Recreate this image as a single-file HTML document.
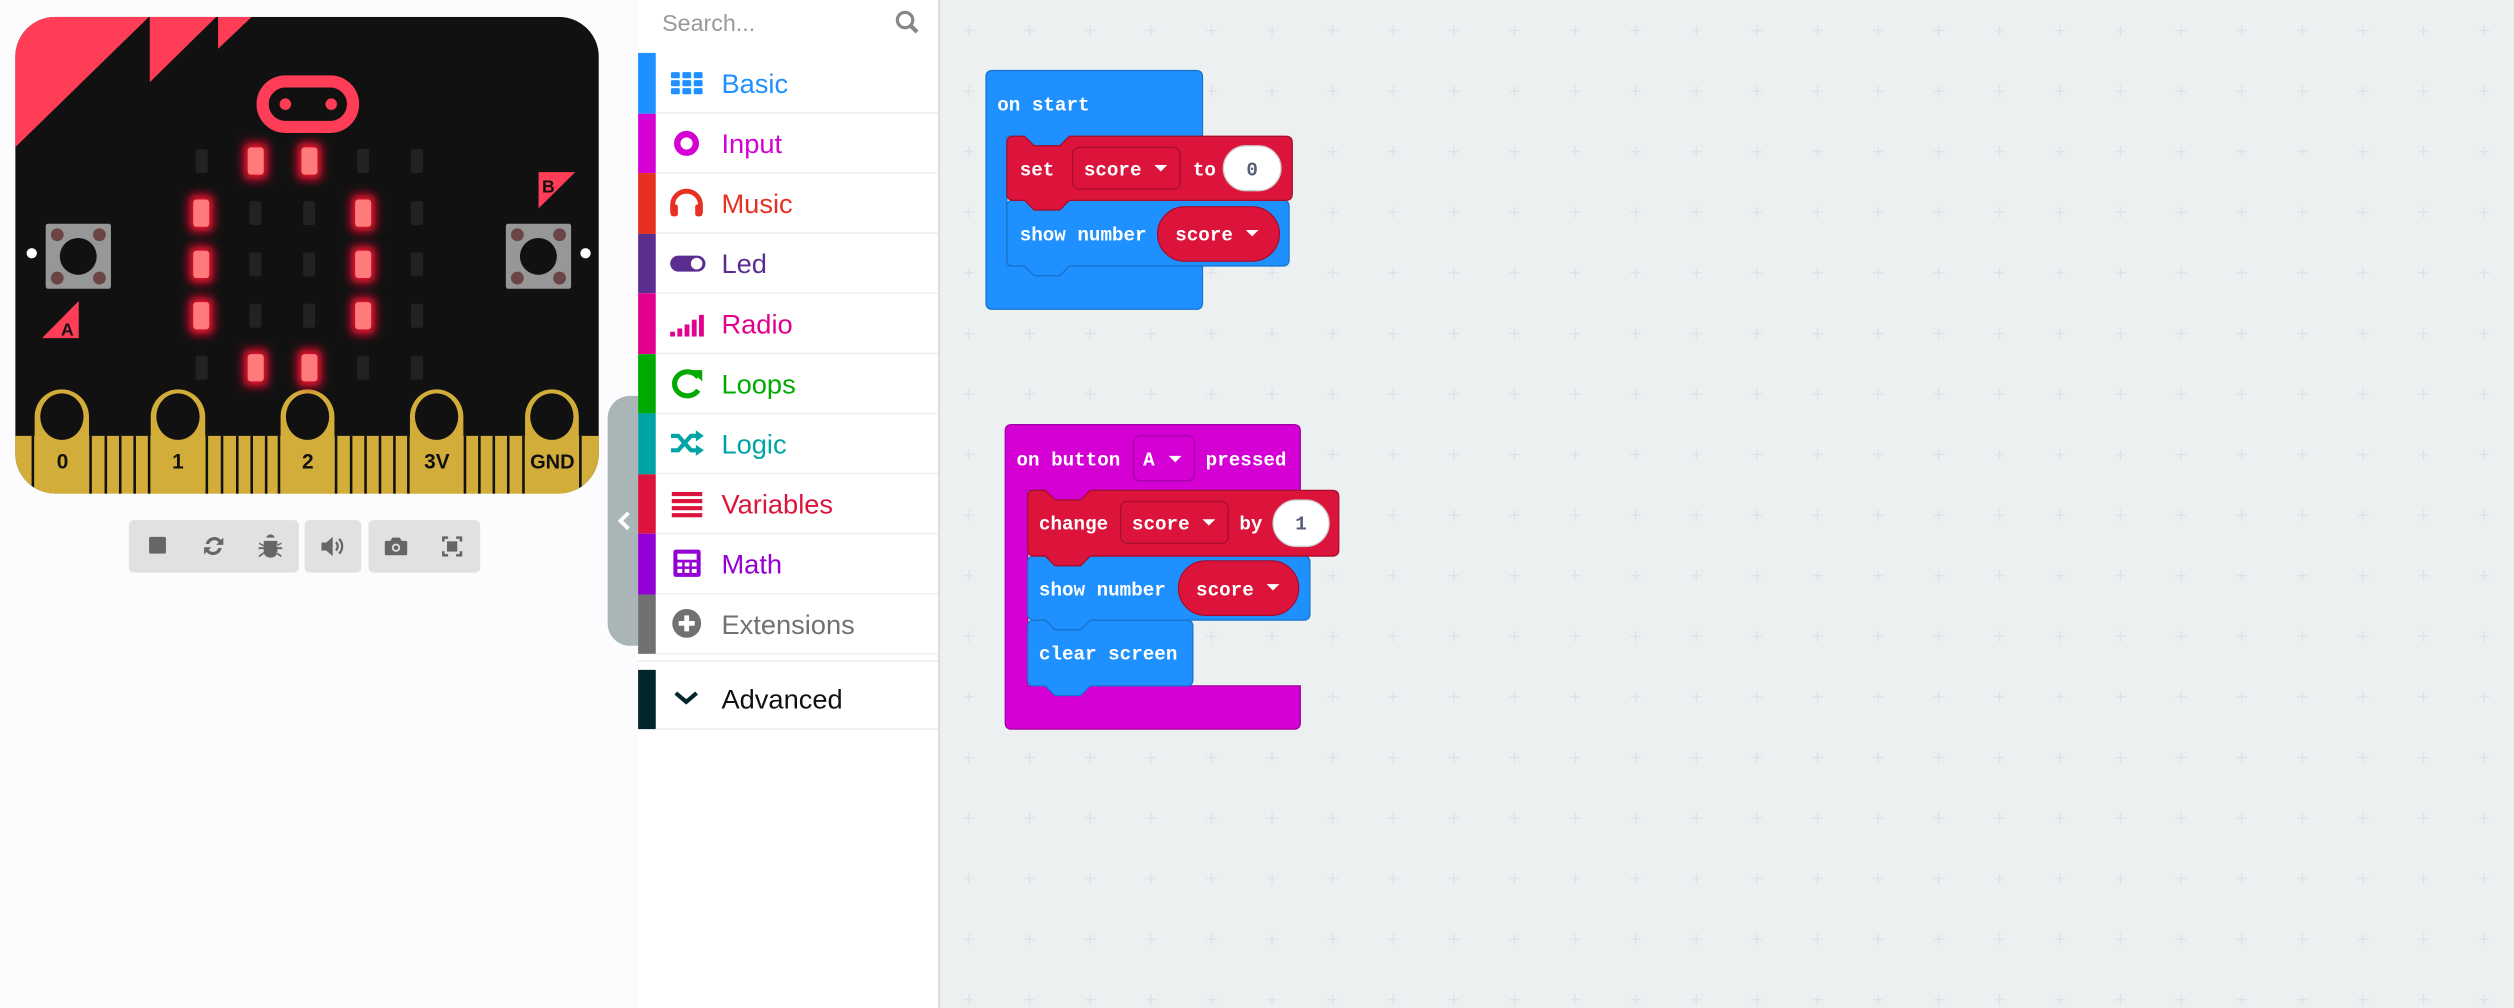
<!DOCTYPE html>
<html><head><meta charset="utf-8"><style>
html,body{margin:0;padding:0;width:2514px;height:1008px;overflow:hidden;background:#fcfcfe}
#w{position:absolute;left:0;top:0;width:1568px;height:629px;transform:scale(1.6033,1.6025);transform-origin:0 0}
svg{position:absolute;left:0;top:0}
.tb{font-family:"Liberation Sans",sans-serif;font-size:17px}
.bt{font-family:"Liberation Mono",monospace;font-weight:bold;font-size:12px;fill:#fff}
</style></head><body><div id="w">
<svg width="1568" height="629" viewBox="0 0 1568 629">
<defs>
<pattern id="g" x="585.5" y="0.2" width="37.8" height="37.8" patternUnits="userSpaceOnUse">
<path d="M18.9 15.5v6.8M15.5 18.9h6.8" stroke="#dde1e3" stroke-width="0.8"/></pattern>
<clipPath id="bc"><rect x="9.5" y="10.5" width="364" height="297.5" rx="25"/></clipPath>
<filter id="gl" x="-100%" y="-100%" width="300%" height="300%"><feGaussianBlur stdDeviation="3"/></filter>
</defs>
<rect x="0" y="0" width="398" height="629" fill="#fcfcfe"/>
<rect x="586" y="0" width="982" height="629" fill="#ecf0f1"/>
<rect x="586" y="0" width="982" height="629" fill="url(#g)"/>
<rect x="398" y="0" width="188" height="629" fill="#fff"/>
<rect x="585" y="0" width="1.5" height="629" fill="#dcdfe1"/>

<g clip-path="url(#bc)">
<rect x="9.5" y="10.5" width="364" height="297.5" fill="#111"/>
<polygon points="9.4,10.5 92.9,10.5 9.4,92" fill="#ff3d57"/>
<polygon points="93.4,10.5 134.9,10.5 93.4,51.3" fill="#ff3d57"/>
<polygon points="136,10.5 157,10.5 136,30.5" fill="#ff3d57"/>
<rect x="0" y="272" width="400" height="40" fill="#d2ad3a"/>
<g stroke="#111" stroke-width="1.6">
<line x1="20.5" y1="272" x2="20.5" y2="310"/>
<line x1="56.5" y1="272" x2="56.5" y2="310"/><line x1="66" y1="272" x2="66" y2="310"/><line x1="75" y1="272" x2="75" y2="310"/><line x1="84" y1="272" x2="84" y2="310"/><line x1="93" y1="272" x2="93" y2="310"/>
<line x1="129" y1="272" x2="129" y2="310"/><line x1="138.5" y1="272" x2="138.5" y2="310"/><line x1="148" y1="272" x2="148" y2="310"/><line x1="157" y1="272" x2="157" y2="310"/><line x1="166" y1="272" x2="166" y2="310"/><line x1="174" y1="272" x2="174" y2="310"/>
<line x1="209.6" y1="272" x2="209.6" y2="310"/><line x1="219" y1="272" x2="219" y2="310"/><line x1="228" y1="272" x2="228" y2="310"/><line x1="237" y1="272" x2="237" y2="310"/><line x1="246" y1="272" x2="246" y2="310"/><line x1="254.7" y1="272" x2="254.7" y2="310"/>
<line x1="290" y1="272" x2="290" y2="310"/><line x1="299" y1="272" x2="299" y2="310"/><line x1="308" y1="272" x2="308" y2="310"/><line x1="317" y1="272" x2="317" y2="310"/><line x1="326.5" y1="272" x2="326.5" y2="310"/>
<line x1="362" y1="272" x2="362" y2="310"/>
</g>
<g fill="#d2ad3a">
<path d="M21.6 310V260A16.95 17 0 0 1 55.5 260V310Z"/>
<path d="M94 310V260A17 17 0 0 1 128 260V310Z"/>
<path d="M175 310V260A16.8 17 0 0 1 208.6 260V310Z"/>
<path d="M255.7 310V260A16.65 17 0 0 1 289 260V310Z"/>
<path d="M327.5 310V260A16.75 17 0 0 1 361 260V310Z"/>
</g>
<g fill="#111">
<ellipse cx="38.6" cy="260" rx="13.5" ry="14.5"/>
<ellipse cx="111" cy="260" rx="13.5" ry="14.5"/>
<ellipse cx="191.8" cy="260" rx="13.5" ry="14.5"/>
<ellipse cx="272.3" cy="260" rx="13.5" ry="14.5"/>
<ellipse cx="344.2" cy="260" rx="13.5" ry="14.5"/>
</g>
<g font-family="Liberation Sans,sans-serif" font-weight="bold" font-size="13" fill="#111" text-anchor="middle">
<text x="39" y="292.5">0</text><text x="111" y="292.5">1</text><text x="192" y="292.5">2</text><text x="272.5" y="292.5">3V</text><text x="344.5" y="292.5" font-size="12.5">GND</text>
</g>
</g>
<rect x="163.8" y="50.8" width="56.4" height="28.4" rx="14.2" fill="none" stroke="#ff3d57" stroke-width="7.6"/>
<circle cx="178" cy="65" r="3.6" fill="#ff3d57"/><circle cx="206.6" cy="65" r="3.6" fill="#ff3d57"/>
<g fill="#222">
<rect x="122" y="93" width="7.6" height="15" rx="1.5"/><rect x="222.7" y="93" width="7.6" height="15" rx="1.5"/><rect x="256.3" y="93" width="7.6" height="15" rx="1.5"/>
<rect x="155.5" y="125.5" width="7.6" height="15" rx="1.5"/><rect x="189" y="125.5" width="7.6" height="15" rx="1.5"/><rect x="256.3" y="125.5" width="7.6" height="15" rx="1.5"/>
<rect x="155.5" y="157.5" width="7.6" height="15" rx="1.5"/><rect x="189" y="157.5" width="7.6" height="15" rx="1.5"/><rect x="256.3" y="157.5" width="7.6" height="15" rx="1.5"/>
<rect x="155.5" y="189.5" width="7.6" height="15" rx="1.5"/><rect x="189" y="189.5" width="7.6" height="15" rx="1.5"/><rect x="256.3" y="189.5" width="7.6" height="15" rx="1.5"/>
<rect x="122" y="222" width="7.6" height="15" rx="1.5"/><rect x="222.7" y="222" width="7.6" height="15" rx="1.5"/><rect x="256.3" y="222" width="7.6" height="15" rx="1.5"/>
</g>
<g>
<g fill="#ff1030" filter="url(#gl)">
<rect x="152" y="89" width="15" height="23" rx="3"/><rect x="185.5" y="89" width="15" height="23" rx="3"/>
<rect x="118" y="121.5" width="15" height="23" rx="3"/><rect x="219" y="121.5" width="15" height="23" rx="3"/>
<rect x="118" y="153.5" width="15" height="23" rx="3"/><rect x="219" y="153.5" width="15" height="23" rx="3"/>
<rect x="118" y="185.5" width="15" height="23" rx="3"/><rect x="219" y="185.5" width="15" height="23" rx="3"/>
<rect x="152" y="218" width="15" height="23" rx="3"/><rect x="185.5" y="218" width="15" height="23" rx="3"/>
</g>
<g fill="#ff7b7b">
<rect x="154.5" y="92" width="10" height="17" rx="2"/><rect x="188" y="92" width="10" height="17" rx="2"/>
<rect x="120.5" y="124.5" width="10" height="17" rx="2"/><rect x="221.5" y="124.5" width="10" height="17" rx="2"/>
<rect x="120.5" y="156.5" width="10" height="17" rx="2"/><rect x="221.5" y="156.5" width="10" height="17" rx="2"/>
<rect x="120.5" y="188.5" width="10" height="17" rx="2"/><rect x="221.5" y="188.5" width="10" height="17" rx="2"/>
<rect x="154.5" y="221" width="10" height="17" rx="2"/><rect x="188" y="221" width="10" height="17" rx="2"/>
</g></g>
<g>
<rect x="28.5" y="139.6" width="40.7" height="40.6" rx="1.5" fill="#979797"/>
<circle cx="48.8" cy="160" r="11.5" fill="#111"/>
<g fill="#6b4545"><circle cx="35.7" cy="146.5" r="4"/><circle cx="62" cy="146.5" r="4"/><circle cx="35.7" cy="173.5" r="4"/><circle cx="62" cy="173.5" r="4"/></g>
<rect x="315.5" y="139.6" width="40.7" height="40.6" rx="1.5" fill="#979797"/>
<circle cx="335.8" cy="160" r="11.5" fill="#111"/>
<g fill="#6b4545"><circle cx="322.7" cy="146.5" r="4"/><circle cx="349" cy="146.5" r="4"/><circle cx="322.7" cy="173.5" r="4"/><circle cx="349" cy="173.5" r="4"/></g>
<circle cx="19.8" cy="158" r="3.2" fill="#fff"/><circle cx="365.2" cy="158" r="3.2" fill="#fff"/>
<polygon points="26.2,211 49.1,187.8 49.1,211" fill="#ff3d57"/>
<text x="42" y="209.5" font-family="Liberation Sans,sans-serif" font-weight="bold" font-size="11" fill="#111" text-anchor="middle">A</text>
<polygon points="335.9,107.4 358.8,107.4 335.9,130" fill="#ff3d57"/>
<text x="342" y="120" font-family="Liberation Sans,sans-serif" font-weight="bold" font-size="11" fill="#111" text-anchor="middle">B</text>
</g>
<rect x="80.4" y="324.6" width="106" height="32.7" rx="3" fill="#e0e1e2"/>
<rect x="190" y="324.6" width="35.4" height="32.7" rx="3" fill="#e0e1e2"/>
<rect x="229.8" y="324.6" width="69.7" height="32.7" rx="3" fill="#e0e1e2"/>
<g fill="#666" stroke="none">
<rect x="93" y="335" width="10.5" height="10.5" rx="1"/>
<path d="M128.3 339.5a5.5 5.5 0 0 1 9.5-2.5l1.5-1.5v4.5h-4.5l1.6-1.6a3.5 3.5 0 0 0-6 1.1z M138.3 342a5.5 5.5 0 0 1-9.5 2.5l-1.5 1.5v-4.5h4.5l-1.6 1.6a3.5 3.5 0 0 0 6-1.1z"/>
<path d="M166.2 335.5a2.5 2 0 0 1 5 0z M164.5 337.5h8.5v7a4.25 3.5 0 0 1-8.5 0z M161.5 338.5l3 1.5v1l-3-1.5z M175.5 338.5l-3 1.5v1l3-1.5z M161.3 341.5h3.2v1.2h-3.2z M172.8 341.5h3.2v1.2h-3.2z M161.5 346.5l3-2v1.3l-3 2z M175.5 346.5l-3-2v1.3l3 2z"/>
<path d="M200.5 338.5h3l4-3.5v12l-4-3.5h-3z"/>
<path d="M209.5 338.3a3.5 3.5 0 0 1 0 5.2" fill="none" stroke="#666" stroke-width="1.4"/>
<path d="M211.5 336.3a6.5 6.5 0 0 1 0 9.2" fill="none" stroke="#666" stroke-width="1.4"/>
<path d="M241 337.5h2.5l1.2-2h4.6l1.2 2h2.5a1 1 0 0 1 1 1v7a1 1 0 0 1-1 1h-12a1 1 0 0 1-1-1v-7a1 1 0 0 1 1-1z"/>
<circle cx="247" cy="341.8" r="2.6" fill="#e0e1e2"/><circle cx="247" cy="341.8" r="1.5"/>
<path d="M276.5 338v-2.5h3M284.5 335.5h3v2.5M287.5 344v2.5h-3M279.5 346.5h-3v-2.5" fill="none" stroke="#666" stroke-width="1.6"/>
<rect x="278.8" y="337.8" width="6.4" height="6.4"/>
</g>
<path d="M398 247H393a14 14 0 0 0-14 14V389a14 14 0 0 0 14 14H398Z" fill="#a9b5b6"/>
<path d="M392 320l-5 5 5 5" fill="none" stroke="#fff" stroke-width="2.4"/>

<text x="413" y="19.5" font-family="Liberation Sans,sans-serif" font-size="14.5" fill="#999">Search...</text>
<circle cx="564.5" cy="12.5" r="4.8" fill="none" stroke="#888" stroke-width="2"/>
<path d="M568 16l4 4" stroke="#888" stroke-width="2.6"/>
<rect x="398" y="33" width="11" height="38" fill="#1e90ff"/>
<rect x="398" y="71" width="11" height="37" fill="#d400d4"/>
<rect x="398" y="108" width="11" height="38" fill="#e63022"/>
<rect x="398" y="146" width="11" height="37" fill="#5c2d91"/>
<rect x="398" y="183" width="11" height="38" fill="#e3008c"/>
<rect x="398" y="221" width="11" height="37" fill="#00aa00"/>
<rect x="398" y="258" width="11" height="38" fill="#00a4a6"/>
<rect x="398" y="296" width="11" height="37" fill="#dc143c"/>
<rect x="398" y="333" width="11" height="38" fill="#9400d3"/>
<rect x="398" y="371" width="11" height="37" fill="#717171"/>
<rect x="398" y="418" width="11" height="37" fill="#00272b"/>
<g fill="#efefef">
<rect x="409" y="70" width="176" height="1"/><rect x="409" y="107.5" width="176" height="1"/><rect x="409" y="145" width="176" height="1"/><rect x="409" y="182.5" width="176" height="1"/><rect x="409" y="220" width="176" height="1"/><rect x="409" y="257.5" width="176" height="1"/><rect x="409" y="295" width="176" height="1"/><rect x="409" y="332.5" width="176" height="1"/><rect x="409" y="370" width="176" height="1"/><rect x="409" y="407.5" width="176" height="1"/><rect x="398" y="412" width="187" height="1.2"/><rect x="409" y="454.5" width="176" height="1"/>
</g>
<g fill="#1e90ff"><rect x="418.5" y="45" width="5.5" height="3.8" rx=".6"/><rect x="425.6" y="45" width="5.5" height="3.8" rx=".6"/><rect x="432.7" y="45" width="5.5" height="3.8" rx=".6"/><rect x="418.5" y="50" width="5.5" height="3.8" rx=".6"/><rect x="425.6" y="50" width="5.5" height="3.8" rx=".6"/><rect x="432.7" y="50" width="5.5" height="3.8" rx=".6"/><rect x="418.5" y="55" width="5.5" height="3.8" rx=".6"/><rect x="425.6" y="55" width="5.5" height="3.8" rx=".6"/><rect x="432.7" y="55" width="5.5" height="3.8" rx=".6"/></g>
<circle cx="428.2" cy="89.5" r="5.8" fill="none" stroke="#d400d4" stroke-width="4"/>
<path d="M419.5 133v-5a8.7 8.7 0 0 1 17.4 0v5" fill="none" stroke="#e63022" stroke-width="3"/>
<rect x="418.3" y="127.5" width="4.5" height="7.5" rx="1.5" fill="#e63022"/><rect x="433.6" y="127.5" width="4.5" height="7.5" rx="1.5" fill="#e63022"/>
<rect x="418" y="159.5" width="22" height="10" rx="5" fill="#5c2d91"/><circle cx="434.5" cy="164.5" r="3.6" fill="#fff"/>
<g fill="#e3008c"><rect x="418" y="207" width="3" height="3"/><rect x="422.5" y="205" width="3" height="5"/><rect x="427" y="202.5" width="3" height="7.5"/><rect x="431.5" y="199.5" width="3" height="10.5"/><rect x="436" y="196.5" width="3" height="13.5"/></g>
<path d="M435.5 235.5a8 7.5 0 1 0 0 8" fill="none" stroke="#00aa00" stroke-width="3.2"/>
<path d="M430.5 231h7.5v7z" fill="#00aa00"/>
<g fill="none" stroke="#00a4a6" stroke-width="2.6"><path d="M418.5 272h4.5l8 9h4.5M418.5 281h4.5l8-9h4.5"/></g>
<path d="M434 268.5l5 3.5-5 3.5zM434 277.5l5 3.5-5 3.5z" fill="#00a4a6"/>
<g fill="#dc143c"><rect x="419" y="307" width="19" height="2.6"/><rect x="419" y="311.4" width="19" height="2.6"/><rect x="419" y="315.8" width="19" height="2.6"/><rect x="419" y="320.2" width="19" height="2.6"/></g>
<rect x="420" y="343" width="17" height="17" rx="1.5" fill="#9400d3"/>
<rect x="422.5" y="345.5" width="12" height="3.8" fill="#fff"/>
<g fill="#fff"><rect x="422.5" y="351" width="3" height="2.5"/><rect x="427" y="351" width="3" height="2.5"/><rect x="431.5" y="351" width="3" height="2.5"/><rect x="422.5" y="355" width="3" height="2.5"/><rect x="427" y="355" width="3" height="2.5"/><rect x="431.5" y="355" width="3" height="2.5"/></g>
<circle cx="428.3" cy="389" r="9" fill="#717171"/>
<path d="M428.3 384v10M423.3 389h10" stroke="#fff" stroke-width="3"/>
<path d="M421.5 432.5l6.5 5.5 6.5-5.5" fill="none" stroke="#00272b" stroke-width="2.6"/>
<g class="tb">
<text x="450" y="58" fill="#1e90ff">Basic</text>
<text x="450" y="95.5" fill="#d400d4">Input</text>
<text x="450" y="133" fill="#e63022">Music</text>
<text x="450" y="170.5" fill="#5c2d91">Led</text>
<text x="450" y="208" fill="#e3008c">Radio</text>
<text x="450" y="245.5" fill="#00aa00">Loops</text>
<text x="450" y="283" fill="#00a4a6">Logic</text>
<text x="450" y="320.5" fill="#dc143c">Variables</text>
<text x="450" y="358" fill="#9400d3">Math</text>
<text x="450" y="395.5" fill="#717171">Extensions</text>
<text x="450" y="442" fill="#111">Advanced</text>
</g>

<path d="M619 44H746Q750 44 750 48V85H667l-6 6h-16l-6-6H628V166H639l6 6h16l6-6H750V189Q750 193 746 193H619Q615 193 615 189V48Q615 44 619 44Z" fill="#1e90ff" stroke="#1873cc" stroke-width=".8"/>
<text class="bt" x="622" y="69">on start</text>
<path d="M632 125H639l6 6h16l6-6H800Q804 125 804 129V162Q804 166 800 166H667l-6 6h-16l-6-6H632Q628 166 628 162V129Q628 125 632 125Z" fill="#1e90ff" stroke="#1873cc" stroke-width=".8"/>
<text class="bt" x="636" y="150">show number</text>
<rect x="722" y="129" width="76" height="34" rx="17" fill="#dc143c" stroke="#a50f2d" stroke-width=".8"/>
<text class="bt" x="733" y="150">score</text>
<path d="M777 143.5h8l-4 4z" fill="#fff"/>
<path d="M632 85H639l6 6h16l6-6H802Q806 85 806 89V121Q806 125 802 125H667l-6 6h-16l-6-6H632Q628 125 628 121V89Q628 85 632 85Z" fill="#dc143c" stroke="#a50f2d" stroke-width=".8"/>
<text class="bt" x="636" y="109.5">set</text>
<rect x="669" y="92" width="67" height="26" rx="4" fill="#dc143c" stroke="#a50f2d" stroke-width=".8"/>
<text class="bt" x="676" y="109.5">score</text>
<path d="M720 103h8l-4 4z" fill="#fff"/>
<text class="bt" x="744" y="109.5">to</text>
<rect x="763" y="91" width="36" height="28" rx="14" fill="#fff" stroke="#ccc" stroke-width=".8"/>
<text class="bt" x="781" y="109.5" style="fill:#575e75" text-anchor="middle">0</text>

<path d="M631 265H807Q811 265 811 269V306H680l-6 6h-16l-6-6H641V428H652l6 6h16l6-6H811V451Q811 455 807 455H631Q627 455 627 451V269Q627 265 631 265Z" fill="#d400d4" stroke="#a300a3" stroke-width=".8"/>
<text class="bt" x="634" y="290.5">on button</text>
<rect x="707" y="272" width="38" height="28" rx="4" fill="#d400d4" stroke="#a300a3" stroke-width=".8"/>
<text class="bt" x="713" y="290.5">A</text>
<path d="M729 284.5h8l-4 4z" fill="#fff"/>
<text class="bt" x="752" y="290.5">pressed</text>
<path d="M645 387H652l6 6h16l6-6H740Q744 387 744 391V424Q744 428 740 428H680l-6 6h-16l-6-6H645Q641 428 641 424V391Q641 387 645 387Z" fill="#1e90ff" stroke="#1873cc" stroke-width=".8"/>
<text class="bt" x="648" y="411.5">clear screen</text>
<path d="M645 347H652l6 6h16l6-6H813Q817 347 817 351V383Q817 387 813 387H680l-6 6h-16l-6-6H645Q641 387 641 383V351Q641 347 645 347Z" fill="#1e90ff" stroke="#1873cc" stroke-width=".8"/>
<text class="bt" x="648" y="371.5">show number</text>
<rect x="735" y="350" width="75" height="34" rx="17" fill="#dc143c" stroke="#a50f2d" stroke-width=".8"/>
<text class="bt" x="746" y="371.5">score</text>
<path d="M790 364.5h8l-4 4z" fill="#fff"/>
<path d="M645 306H652l6 6h16l6-6H831Q835 306 835 310V343Q835 347 831 347H680l-6 6h-16l-6-6H645Q641 347 641 343V310Q641 306 645 306Z" fill="#dc143c" stroke="#a50f2d" stroke-width=".8"/>
<text class="bt" x="648" y="330.5">change</text>
<rect x="699" y="313" width="67" height="26" rx="4" fill="#dc143c" stroke="#a50f2d" stroke-width=".8"/>
<text class="bt" x="706" y="330.5">score</text>
<path d="M750 324h8l-4 4z" fill="#fff"/>
<text class="bt" x="773" y="330.5">by</text>
<rect x="794" y="312" width="35" height="29" rx="14.5" fill="#fff" stroke="#ccc" stroke-width=".8"/>
<text class="bt" x="811.5" y="330.5" style="fill:#575e75" text-anchor="middle">1</text>
</svg>
</div></body></html>
